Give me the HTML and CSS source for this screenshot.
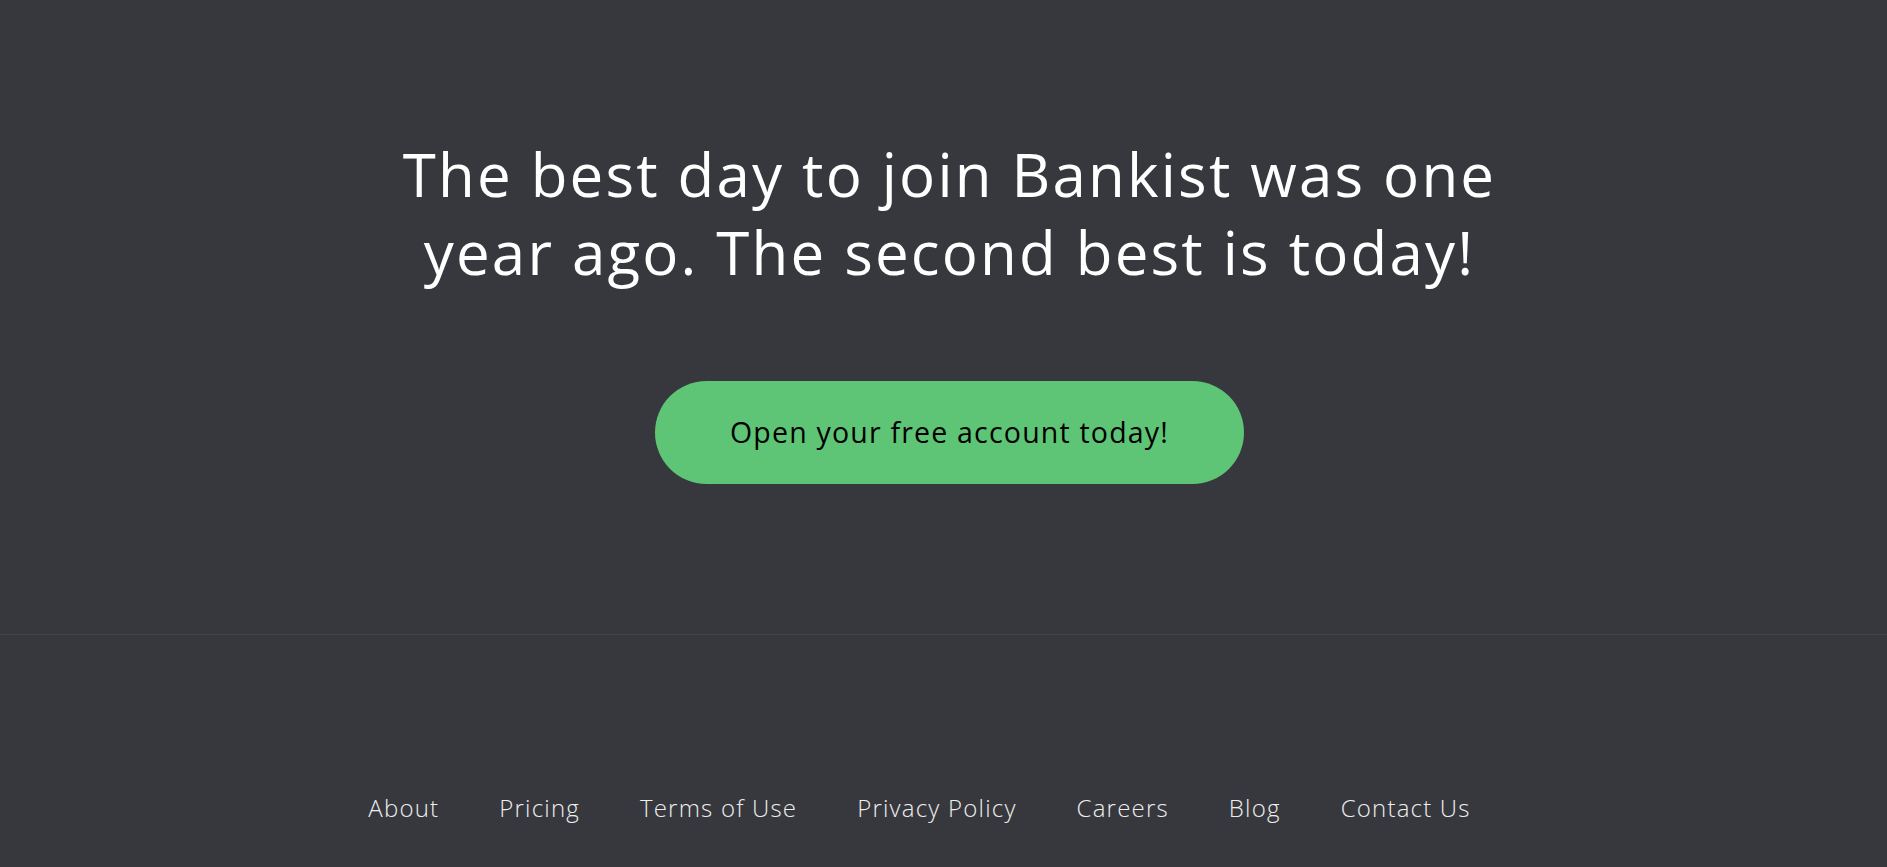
FILE: index.html
```html
<!DOCTYPE html>
<html lang="en">
<head>
<meta charset="utf-8">
<title>Bankist</title>
<link rel="stylesheet" href="styles.css">
</head>
<body>
<section class="signup">
  <div class="signup__title">
    <h3 class="signup__header">The best day to join Bankist was one year ago. The second best is today!</h3>
  </div>
  <button class="btn">Open your free account today!</button>
</section>
<footer class="footer">
  <ul class="footer__nav">
    <li class="footer__item"><a class="footer__link" href="#">About</a></li>
    <li class="footer__item"><a class="footer__link" href="#">Pricing</a></li>
    <li class="footer__item"><a class="footer__link" href="#">Terms of Use</a></li>
    <li class="footer__item"><a class="footer__link" href="#">Privacy Policy</a></li>
    <li class="footer__item"><a class="footer__link" href="#">Careers</a></li>
    <li class="footer__item"><a class="footer__link" href="#">Blog</a></li>
    <li class="footer__item"><a class="footer__link" href="#">Contact Us</a></li>
  </ul>
</footer>
</body>
</html>
```

FILE: styles.css
```css
* {
  margin: 0;
  padding: 0;
  box-sizing: border-box;
}

html, body {
  background-color: #37383d;
}

body {
  font-family: "Open Sans", "Noto Sans", sans-serif;
  font-weight: 300;
  line-height: 1.9;
  color: #444;
  overflow: hidden;
}

.signup {
  background-color: #37383d;
  border-bottom: 1px solid #444;
  text-align: center;
  padding: 135px 45px 150px 57px;
}

.signup__title {
  max-width: 1150px;
  margin: 0 auto 90px;
}

.signup__header {
  font-size: 60px;
  line-height: 78px;
  font-weight: 500;
  letter-spacing: 2.2px;
  color: #fff;
}

.btn {
  display: inline-block;
  background-color: #5ec576;
  font-family: inherit;
  font-size: 28.5px;
  font-weight: 500;
  line-height: 1.5;
  letter-spacing: 1.2px;
  color: #000;
  border: none;
  border-radius: 150px;
  padding: 30px 75px;
  cursor: pointer;
}

.footer {
  padding: 150px 45px 150px 57px;
  background-color: #37383d;
}

.footer__nav {
  list-style: none;
  display: flex;
  justify-content: center;
  margin-bottom: 75px;
}

.footer__item {
  margin-right: 60px;
}

.footer__link {
  font-size: 24px;
  letter-spacing: 1.2px;
  color: #eee;
  text-decoration: none;
}
```
